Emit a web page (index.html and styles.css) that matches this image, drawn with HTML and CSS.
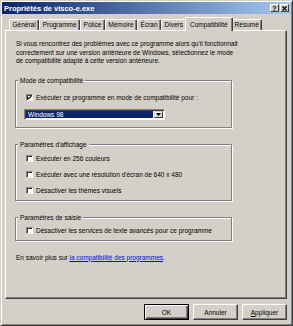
FILE: index.html
```html
<!DOCTYPE html>
<html lang="fr">
<head>
    <meta charset="UTF-8">
    <meta name="viewport" content="width=device-width, initial-scale=1.0">
    <title>Propriétés de visco-e.exe</title>
    <link rel="stylesheet" href="styles.css">
</head>
<body>
    <div class="window">
        <div class="titlebar">
            <span class="title">Propriétés de visco-e.exe</span>
            <div class="title-buttons">
                <span class="tbtn">?</span>
                <span class="tbtn">
                    <svg width="5" height="5" viewBox="0 0 5 5"><path d="M0.5 0.5 L4.5 4.5 M4.5 0.5 L0.5 4.5" stroke="#000" stroke-width="1.2"/></svg>
                </span>
            </div>
        </div>

        <div class="tabctl">
            <ul class="tabs">
                <li class="tab">Général</li>
                <li class="tab">Programme</li>
                <li class="tab">Police</li>
                <li class="tab">Mémoire</li>
                <li class="tab">Écran</li>
                <li class="tab">Divers</li>
                <li class="tab selected">Compatibilité</li>
                <li class="tab">Résumé</li>
            </ul>

            <div class="panel">
                <p class="intro">Si vous rencontrez des problèmes avec ce programme alors qu'il fonctionnait<br>correctement sur une version antérieure de Windows, sélectionnez le mode<br>de compatibilité adapté à cette version antérieure.</p>

                <fieldset class="group group-mode">
                    <legend>Mode de compatibilité</legend>
                    <label class="check-row">
                        <span class="check">
                            <svg width="5" height="5" viewBox="0 0 5 5"><path d="M0.3 2.2 L1.8 3.8 L4.7 0.6" fill="none" stroke="#000" stroke-width="1.1"/></svg>
                        </span>
                        Exécuter ce programme en mode de compatibilité pour :
                    </label>
                    <div class="combo">
                        <span class="combo-value">Windows 98</span>
                        <span class="combo-btn">
                            <svg width="5" height="3" viewBox="0 0 5 3"><path d="M0 0 H5 L2.5 3 Z" fill="#000"/></svg>
                        </span>
                    </div>
                </fieldset>

                <fieldset class="group group-display">
                    <legend>Paramètres d'affichage</legend>
                    <label class="check-row"><span class="check"></span>Exécuter en 256 couleurs</label>
                    <label class="check-row"><span class="check"></span>Exécuter avec une résolution d'écran de 640 x 480</label>
                    <label class="check-row"><span class="check"></span>Désactiver les thèmes visuels</label>
                </fieldset>

                <fieldset class="group group-input">
                    <legend>Paramètres de saisie</legend>
                    <label class="check-row"><span class="check"></span>Désactiver les services de texte avancés pour ce programme</label>
                </fieldset>

                <p class="more">En savoir plus sur <a href="#">la compatibilité des programmes</a>.</p>
            </div>
        </div>

        <div class="actions">
            <button class="btn btn-default">OK</button>
            <button class="btn">Annuler</button>
            <button class="btn"><u>A</u>ppliquer</button>
        </div>
    </div>
</body>
</html>
```

FILE: styles.css
```css
* {
    box-sizing: border-box;
}

html, body {
    margin: 0;
}

body {
    font-family: "Liberation Sans", Arial, sans-serif;
    font-size: 6.5px;
    color: #000;
    background: #d4d0c8;
}

/* Window frame */
.window {
    width: 293px;
    height: 326px;
    display: flex;
    flex-direction: column;
    padding: 1px;
    background: #d4d0c8;
    border: 1px solid;
    border-color: #d4d0c8 #404040 #404040 #d4d0c8;
    box-shadow: inset 1px 1px #fff, inset -1px -1px #808080;
}

.titlebar {
    height: 12px;
    display: flex;
    align-items: center;
    justify-content: space-between;
    padding: 0 2px 0 2px;
    background: linear-gradient(to right, #0a246a, #a6caf0);
    color: #fff;
    font-size: 7.5px;
    font-weight: bold;
}

.title-buttons {
    display: flex;
    gap: 1px;
}

.tbtn {
    width: 9px;
    height: 8px;
    display: flex;
    align-items: center;
    justify-content: center;
    background: #d4d0c8;
    color: #000;
    font-size: 7px;
    line-height: 1;
    border: 1px solid;
    border-color: #fff #404040 #404040 #fff;
}

/* Tabs */
.tabctl {
    flex: 1;
    display: flex;
    flex-direction: column;
    margin: 3px 4px 0 3px;
}

.tabs {
    display: flex;
    align-items: flex-end;
    height: 14px;
    margin: 0 0 -1px;
    padding: 0 0 0 4px;
    list-style: none;
}

.tab {
    margin-bottom: 1px;
    padding: 0 2.5px;
    line-height: 10px;
    white-space: nowrap;
    background: #d4d0c8;
    border: 1px solid;
    border-bottom: 0;
    border-color: #fff #404040 #404040 #fff;
    border-radius: 2px 2px 0 0;
    box-shadow: inset -1px 0 #808080;
}

.tab.selected {
    z-index: 1;
    margin: 0 -2px;
    padding: 2px 4.5px 1px;
}

.panel {
    flex: 1;
    padding: 9px 10px 0 9px;
    border: 1px solid;
    border-color: #fff #404040 #404040 #fff;
    box-shadow: inset -1px -1px #808080;
}

.intro {
    margin: 0 0 11px 1px;
    line-height: 8.5px;
}

/* Group boxes */
.group {
    width: 217px;
    margin: 0 0 13px;
    padding: 8px 4px 7px 9px;
    border: 1px solid #808080;
    box-shadow: inset 1px 1px #fff, 1px 1px #fff;
}

.group legend {
    margin-left: -7px;
    padding: 0 2px;
    line-height: 8px;
    background: #d4d0c8;
}

.group-display {
    padding-top: 5px;
    padding-bottom: 4px;
}

.group-input {
    padding-top: 4px;
    padding-bottom: 4px;
}

.check-row {
    display: flex;
    align-items: center;
    gap: 3px;
    height: 10px;
    padding-left: 1px;
}

.check-row + .check-row {
    margin-top: 6px;
}

.check {
    width: 7px;
    height: 7px;
    flex: none;
    display: flex;
    align-items: center;
    justify-content: center;
    background: #fff;
    border: 1px solid;
    border-color: #808080 #fff #fff #808080;
    box-shadow: inset 1px 1px #404040;
}

/* Combo box */
.combo {
    display: flex;
    width: 141px;
    height: 11px;
    margin: 6px 0 0 -1px;
    padding: 1px;
    background: #fff;
    border: 1px solid;
    border-color: #808080 #fff #fff #808080;
    box-shadow: inset 1px 1px #404040;
}

.combo-value {
    flex: 1;
    margin-right: 1px;
    padding-left: 2px;
    line-height: 7px;
    color: #fff;
    background: #0a246a;
}

.combo-btn {
    width: 9px;
    display: flex;
    align-items: center;
    justify-content: center;
    background: #d4d0c8;
    border: 1px solid;
    border-color: #d4d0c8 #404040 #404040 #d4d0c8;
    box-shadow: inset 1px 1px #fff;
}

.more {
    margin: 0 0 0 1px;
    line-height: 8.5px;
}

.more a {
    color: #00f;
    text-decoration: underline;
}

/* Dialog buttons */
.actions {
    display: flex;
    justify-content: flex-end;
    gap: 4px;
    padding: 5px 4px 4px 0;
}

.btn {
    width: 45px;
    height: 16px;
    padding: 0;
    font: inherit;
    color: #000;
    background: #d4d0c8;
    border: 1px solid;
    border-color: #fff #404040 #404040 #fff;
    box-shadow: inset -1px -1px #808080;
}

.btn-default {
    border-color: #000;
    box-shadow: inset 1px 1px #fff, inset -1px -1px #404040, inset -2px -2px #808080;
}
```
